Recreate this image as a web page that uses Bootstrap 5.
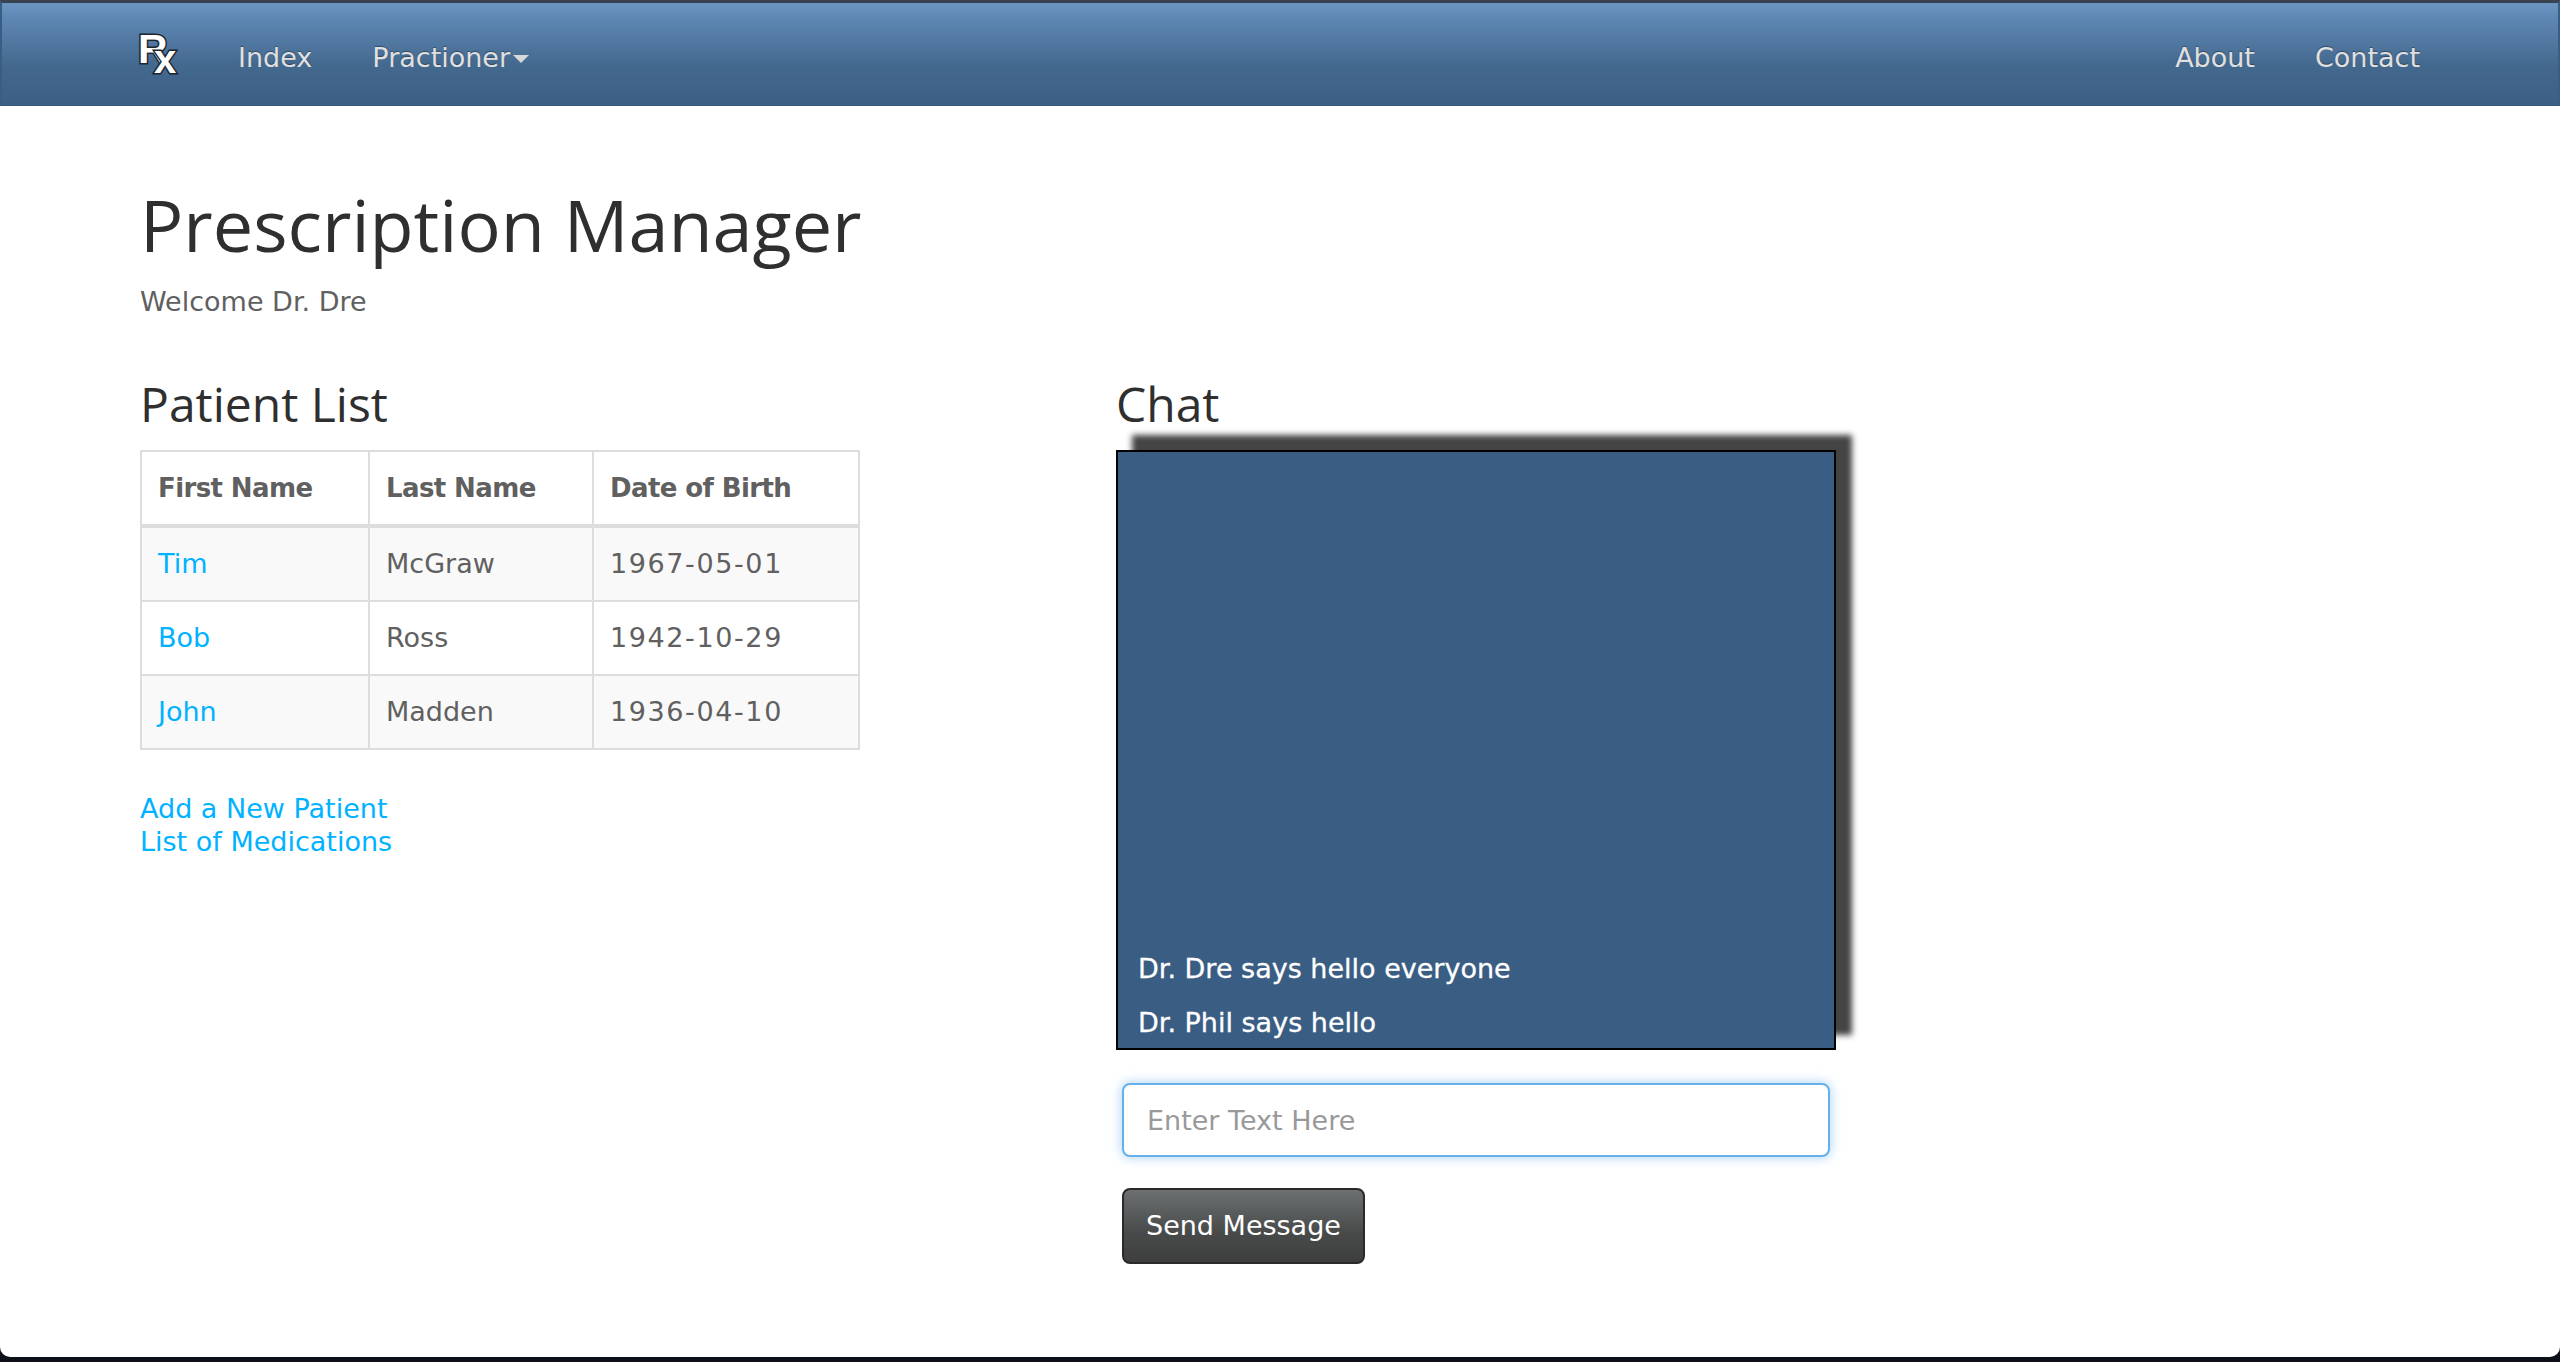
<!DOCTYPE html>
<html lang="en">
<head>
    <meta charset="UTF-8">
    <meta name="viewport" content="width=device-width, initial-scale=1.0">
    <title>Prescription Manager</title>
    <link href="https://cdn.jsdelivr.net/npm/bootstrap@5.3.0/dist/css/bootstrap.min.css" rel="stylesheet">
    <style>
        html, body {
            height: 100%;
        }
        body {
            background-color: #0c0f17;
            color: #606060;
            font-family: "DejaVu Sans", sans-serif;
            font-size: 27px;
            line-height: 40px;
        }
        .page-shell {
            background-color: #fff;
            height: 1357px;
            border-radius: 0 0 10px 10px;
            overflow: hidden;
        }
        .rx-navbar {
            height: 106px;
            padding: 0 138px 0 138px;
            background: linear-gradient(#6a93bf 3px, #5f88b4 14px, #44698f 62px, #3a5d83 106px);
            border-top: 3px solid #39424e;
            border-bottom: 1px solid #35577b;
            border-left: 2px solid #3a5d83;
            border-right: 2px solid #3a5d83;
        }
        .rx-navbar .nav-link {
            color: #e0e0e0;
            padding: 7px 0 0;
            text-shadow: 0 -1px 1px rgba(0, 0, 0, .35);
        }
        .rx-nav-list {
            column-gap: 60px;
        }
        .rx-logo {
            display: block;
            width: 38px;
            height: 40px;
            margin-right: 60px;
            overflow: visible;
        }
        .rx-logo text {
            font-family: "Liberation Sans", sans-serif;
            font-weight: 700;
            fill: #fff;
            stroke: #1d2630;
            stroke-width: 3px;
            paint-order: stroke;
        }
        .nav-caret {
            display: inline-block;
            width: 0;
            height: 0;
            margin-left: 3px;
            vertical-align: middle;
            border-top: 8px solid #d8d8d8;
            border-left: 8px solid transparent;
            border-right: 8px solid transparent;
        }
        .main-area {
            padding: 78px 0 0 140px;
        }
        .app-title {
            font-family: "Open Sans", sans-serif;
            font-size: 72px;
            font-weight: 400;
            line-height: 80px;
            color: #2f2f2f;
            margin: 0 0 18px;
        }
        .section-title {
            font-family: "Open Sans", sans-serif;
            font-size: 48px;
            font-weight: 400;
            line-height: 52px;
            color: #2f2f2f;
            margin: 0 0 20px;
        }
        .welcome-line {
            height: 40px;
            margin-bottom: 56px;
        }
        .patient-col {
            width: 720px;
            margin-right: 256px;
        }
        .chat-col {
            width: 720px;
        }
        .patient-table {
            table-layout: fixed;
            width: 720px;
            border-collapse: collapse;
            margin-bottom: 42px;
        }
        .patient-table th, .patient-table td {
            border: 2px solid #ddd;
            padding: 16px;
            height: 74px;
            color: #606060;
            font-weight: 400;
        }
        .patient-table th {
            font-size: 26px;
            font-weight: 700;
            letter-spacing: -.6px;
            border-bottom-width: 4px;
        }
        .patient-table tbody tr:nth-child(odd) td {
            background-color: #f9f9f9;
        }
        .patient-table td.birth-cell {
            letter-spacing: 1.6px;
        }
        .patient-table a, .side-links a {
            color: #00b2ff;
            text-decoration: none;
        }
        .side-links a {
            display: block;
            line-height: 33px;
        }
        .chat-box {
            width: 720px;
            height: 600px;
            padding: 0 20px;
            background-color: #3a5d83;
            border: 2px solid #000;
            box-shadow: 16px -15px 6px #444;
            color: #fff;
            display: flex;
            flex-direction: column;
            justify-content: flex-end;
        }
        .chat-msg {
            line-height: 54px;
            -webkit-text-stroke: .3px #fff;
        }
        .chat-msg:last-child {
            margin-bottom: -2px;
        }
        .chat-form {
            width: 708px;
            margin: 33px 0 0 6px;
        }
        .chat-input {
            height: 74px;
            font-size: 27px;
            padding: 0 23px;
            color: #606060;
            border: 2px solid #66afe9;
            border-radius: 8px;
            box-shadow: 0 0 12px rgba(102, 175, 233, .6);
        }
        .chat-input::placeholder {
            color: #999;
        }
        .send-btn {
            height: 76px;
            margin-top: 31px;
            padding: 0 22px;
            font-size: 27px;
            color: #fff;
            border: 2px solid #2a2a2a;
            border-radius: 8px;
            background: linear-gradient(#6c7070, #484a4a 60%, #3e3e3e);
        }
    </style>
</head>
<body>
<div class="page-shell">
    <nav class="rx-navbar d-flex align-items-center">
        <a href="#" class="d-block">
            <svg class="rx-logo" viewBox="0 0 38 40" aria-label="Rx">
                <text x="-2" y="29" font-size="41">R<tspan x="14" y="39" font-size="40">x</tspan></text>
            </svg>
        </a>
        <ul class="nav rx-nav-list align-items-center">
            <li class="nav-item"><a class="nav-link" href="#">Index</a></li>
            <li class="nav-item"><a class="nav-link" href="#">Practioner<span class="nav-caret"></span></a></li>
        </ul>
        <ul class="nav rx-nav-list align-items-center ms-auto">
            <li class="nav-item"><a class="nav-link" href="#">About</a></li>
            <li class="nav-item"><a class="nav-link" href="#">Contact</a></li>
        </ul>
    </nav>

    <div class="main-area">
        <h1 class="app-title">Prescription Manager</h1>
        <div class="welcome-line">Welcome Dr. Dre</div>
        <div class="d-flex">
            <div class="patient-col">
                <h3 class="section-title">Patient List</h3>
                <table class="patient-table">
                    <thead>
                    <tr><th style="width:228px">First Name</th><th style="width:224px">Last Name</th><th>Date of Birth</th></tr>
                    </thead>
                    <tbody>
                    <tr><td><a href="#">Tim</a></td><td>McGraw</td><td class="birth-cell">1967-05-01</td></tr>
                    <tr><td><a href="#">Bob</a></td><td>Ross</td><td class="birth-cell">1942-10-29</td></tr>
                    <tr><td><a href="#">John</a></td><td>Madden</td><td class="birth-cell">1936-04-10</td></tr>
                    </tbody>
                </table>
                <div class="side-links">
                    <a href="#">Add a New Patient</a>
                    <a href="#">List of Medications</a>
                </div>
            </div>
            <div class="chat-col">
                <h3 class="section-title">Chat</h3>
                <div class="chat-box">
                    <div class="chat-msg">Dr. Dre says hello everyone</div>
                    <div class="chat-msg">Dr. Phil says hello</div>
                </div>
                <form class="chat-form">
                    <input type="text" class="form-control chat-input" placeholder="Enter Text Here">
                    <button type="button" class="btn send-btn">Send Message</button>
                </form>
            </div>
        </div>
    </div>
</div>
<script src="https://cdn.jsdelivr.net/npm/bootstrap@5.3.0/dist/js/bootstrap.bundle.min.js"></script>
</body>
</html>
